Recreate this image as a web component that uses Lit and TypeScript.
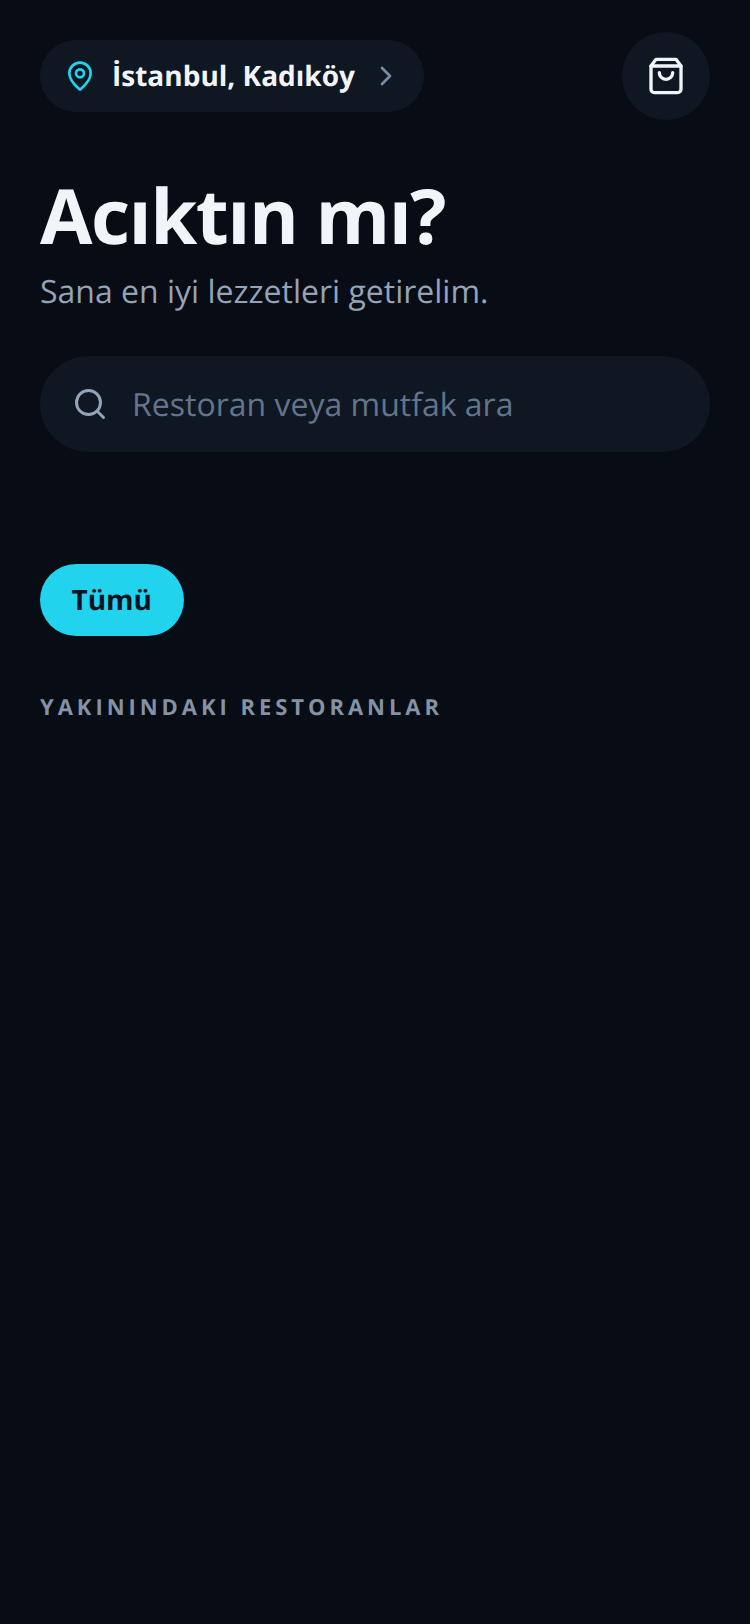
import { LitElement, html, css } from "lit";
import { customElement } from "lit/decorators.js";

@customElement("app-root")
export class AppRoot extends LitElement {
  static styles = css`
    :host {
      display: block;
      min-height: 1624px;
      background: #080c14;
      font-family: "Open Sans", sans-serif;
      text-rendering: geometricPrecision;
      box-sizing: border-box;
      padding: 32px 40px 0;
    }
    .top { display: flex; align-items: center; justify-content: space-between; height: 88px; }
    .loc {
      display: flex; align-items: center; height: 72px; width: 384px; box-sizing: border-box;
      background: #0f1722; border-radius: 36px; padding: 0 22px 0 24px;
    }
    .loc .pin { width: 32px; height: 32px; flex: none; }
    .loc .name { font-size: 28px; font-weight: 700; color: #f1f5f9; margin-left: 16px; white-space: nowrap; }
    .loc .chev { width: 32px; height: 32px; flex: none; margin-left: auto; }
    .cart {
      width: 88px; height: 88px; border-radius: 50%; background: #0f1722;
      display: flex; align-items: center; justify-content: center;
    }
    .cart svg { width: 40px; height: 40px; }
    h1 {
      margin: 50px 0 0; font-size: 76px; line-height: 92px; font-weight: 700;
      letter-spacing: -1.52px; color: #f1f5f9;
    }
    .sub { margin: 8px 0 0; font-size: 32px; line-height: 44px; color: #94a3b8; }
    .search {
      margin-top: 42px; height: 96px; border-radius: 48px; background: #0f1722;
      display: flex; align-items: center; padding: 0 32px; gap: 24px;
    }
    .search svg { width: 36px; height: 36px; flex: none; }
    .search span { font-size: 32px; color: #64748b; }
    .chips { margin-top: 112px; display: flex; }
    .chip {
      height: 72px; border-radius: 36px; background: #22d3ee; color: #0b1220;
      font-size: 28px; font-weight: 700; padding: 0 31.5px; display: flex; align-items: center;
    }
    .label {
      margin: 53px 0 0; font-size: 22px; line-height: 36px; font-weight: 700;
      letter-spacing: 3.96px; color: #8492a6;
    }
  `;

  render() {
    return html`
      <div class="top">
        <div class="loc">
          <svg class="pin" viewBox="0 0 24 24" fill="none" stroke="#22d3ee" stroke-width="2" stroke-linecap="round" stroke-linejoin="round">
            <path d="M20 10c0 5-5.5 10.2-7.4 11.8a1 1 0 0 1-1.2 0C9.5 20.2 4 15 4 10a8 8 0 0 1 16 0"/>
            <circle cx="12" cy="10" r="3"/>
          </svg>
          <span class="name">İstanbul, Kadıköy</span>
          <svg class="chev" viewBox="0 0 24 24" fill="none" stroke="#7b8aa0" stroke-width="2" stroke-linecap="round" stroke-linejoin="round">
            <path d="m9 18 6-6-6-6"/>
          </svg>
        </div>
        <div class="cart">
          <svg viewBox="0 0 24 24" fill="none" stroke="#f1f5f9" stroke-width="2" stroke-linecap="round" stroke-linejoin="round">
            <path d="M6 2 3 6v14a2 2 0 0 0 2 2h14a2 2 0 0 0 2-2V6l-3-4Z"/>
            <path d="M3 6h18"/>
            <path d="M16 10a4 4 0 0 1-8 0"/>
          </svg>
        </div>
      </div>
      <h1>Acıktın mı?</h1>
      <p class="sub">Sana en iyi lezzetleri getirelim.</p>
      <div class="search">
        <svg viewBox="0 0 24 24" fill="none" stroke="#94a3b8" stroke-width="2" stroke-linecap="round" stroke-linejoin="round">
          <circle cx="11" cy="11" r="8"/><path d="m21 21-4.3-4.3"/>
        </svg>
        <span>Restoran veya mutfak ara</span>
      </div>
      <div class="chips"><div class="chip">Tümü</div></div>
      <p class="label">YAKININDAKI RESTORANLAR</p>
    `;
  }
}
